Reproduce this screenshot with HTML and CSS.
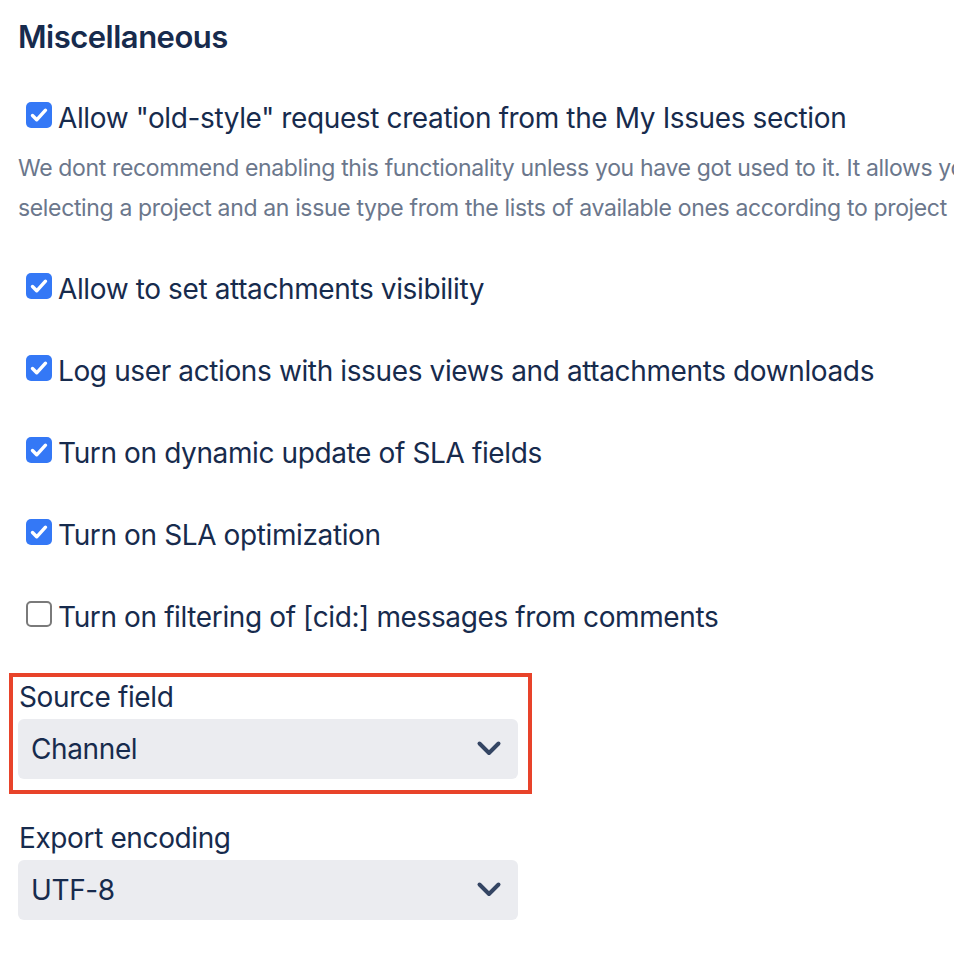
FILE: index.html
```html
<!DOCTYPE html>
<html lang="en">
<head>
<meta charset="utf-8">
<title>Miscellaneous</title>
<link rel="stylesheet" href="styles.css">
</head>
<body>
<main class="page">
  <h2 class="title">Miscellaneous</h2>

  <div class="option first">
    <label class="check">
      <span class="box checked"><svg viewBox="0 0 26 26" width="26" height="26"><path d="M6.5 13.5l4.2 4.3 8.8-9.6" fill="none" stroke="#fff" stroke-width="3.4" stroke-linecap="round" stroke-linejoin="round"/></svg></span>
      <span class="check-text">Allow "old-style" request creation from the My Issues section</span>
    </label>
    <p class="desc"><span class="desc-line">We dont recommend enabling this functionality unless you have got used to it. It allows you to create requests by</span><span class="desc-line">selecting a project and an issue type from the lists of available ones according to project permissions.</span></p>
  </div>

  <div class="option after-desc">
    <label class="check">
      <span class="box checked"><svg viewBox="0 0 26 26" width="26" height="26"><path d="M6.5 13.5l4.2 4.3 8.8-9.6" fill="none" stroke="#fff" stroke-width="3.4" stroke-linecap="round" stroke-linejoin="round"/></svg></span>
      <span class="check-text">Allow to set attachments visibility</span>
    </label>
  </div>

  <div class="option">
    <label class="check">
      <span class="box checked"><svg viewBox="0 0 26 26" width="26" height="26"><path d="M6.5 13.5l4.2 4.3 8.8-9.6" fill="none" stroke="#fff" stroke-width="3.4" stroke-linecap="round" stroke-linejoin="round"/></svg></span>
      <span class="check-text">Log user actions with issues views and attachments downloads</span>
    </label>
  </div>

  <div class="option">
    <label class="check">
      <span class="box checked"><svg viewBox="0 0 26 26" width="26" height="26"><path d="M6.5 13.5l4.2 4.3 8.8-9.6" fill="none" stroke="#fff" stroke-width="3.4" stroke-linecap="round" stroke-linejoin="round"/></svg></span>
      <span class="check-text">Turn on dynamic update of SLA fields</span>
    </label>
  </div>

  <div class="option">
    <label class="check">
      <span class="box checked"><svg viewBox="0 0 26 26" width="26" height="26"><path d="M6.5 13.5l4.2 4.3 8.8-9.6" fill="none" stroke="#fff" stroke-width="3.4" stroke-linecap="round" stroke-linejoin="round"/></svg></span>
      <span class="check-text">Turn on SLA optimization</span>
    </label>
  </div>

  <div class="option">
    <label class="check">
      <span class="box"></span>
      <span class="check-text">Turn on filtering of [cid:] messages from comments</span>
    </label>
  </div>

  <div class="field highlight">
    <div class="field-label">Source field</div>
    <div class="select">
      <span class="select-value">Channel</span>
      <svg class="chevron" viewBox="0 0 26 18" width="26" height="18"><path d="M3.5 3.5l9.5 9.5 9.5-9.5" fill="none" stroke="#344563" stroke-width="4" stroke-linecap="round" stroke-linejoin="round"/></svg>
    </div>
  </div>

  <div class="field">
    <div class="field-label">Export encoding</div>
    <div class="select">
      <span class="select-value">UTF-8</span>
      <svg class="chevron" viewBox="0 0 26 18" width="26" height="18"><path d="M3.5 3.5l9.5 9.5 9.5-9.5" fill="none" stroke="#344563" stroke-width="4" stroke-linecap="round" stroke-linejoin="round"/></svg>
    </div>
  </div>
</main>
</body>
</html>
```

FILE: styles.css
```css
html, body {
  margin: 0;
  padding: 0;
  background: #ffffff;
  overflow: hidden;
}

body {
  font-family: Inter, "Noto Sans", "Liberation Sans", sans-serif;
  color: #172B4D;
}

.page {
  padding: 17px 0 0 18px;
  display: flex;
  flex-direction: column;
}

.title {
  margin: 0;
  font-size: 31px;
  line-height: 40px;
  font-weight: 600;
  letter-spacing: -0.5px;
}

.option {
  margin-top: 42px;
}

.option.first {
  margin-top: 41px;
}

.option.after-desc {
  margin-top: 41px;
}

.check {
  display: flex;
  align-items: flex-start;
  gap: 6px;
  height: 40px;
  padding-left: 8px;
  font-size: 28px;
  line-height: 40px;
  letter-spacing: -0.38px;
  white-space: nowrap;
}

.box {
  flex: none;
  width: 26px;
  height: 26px;
  box-sizing: border-box;
  border: 2px solid #7a7a7a;
  border-radius: 5px;
  background: #fff;
  display: block;
  margin-top: 4px;
}

.box.checked {
  border: none;
  background: #3478F6;
}

.box svg {
  display: block;
}

.desc {
  margin: 10px 0 0;
  font-size: 23px;
  line-height: 40px;
  color: #6B778C;
  white-space: nowrap;
  letter-spacing: -0.35px;
}

.desc-line {
  display: block;
}

.field {
  align-self: flex-start;
  margin-top: 24px;
}

.field.highlight {
  margin-top: 36px;
  margin-left: -9px;
  border: 4px solid #E8432A;
  padding: 0 10px 11px 5px;
}

.field-label {
  font-size: 28px;
  line-height: 40px;
  letter-spacing: -0.38px;
  padding-left: 1px;
}

.select {
  margin-top: 2px;
  width: 500px;
  height: 60px;
  box-sizing: border-box;
  background: #EBECF0;
  border-radius: 6px;
  display: flex;
  align-items: center;
  justify-content: space-between;
  padding: 0 16px 0 13px;
}

.select-value {
  font-size: 28px;
  letter-spacing: -0.38px;
}

.chevron {
  display: block;
}
```
